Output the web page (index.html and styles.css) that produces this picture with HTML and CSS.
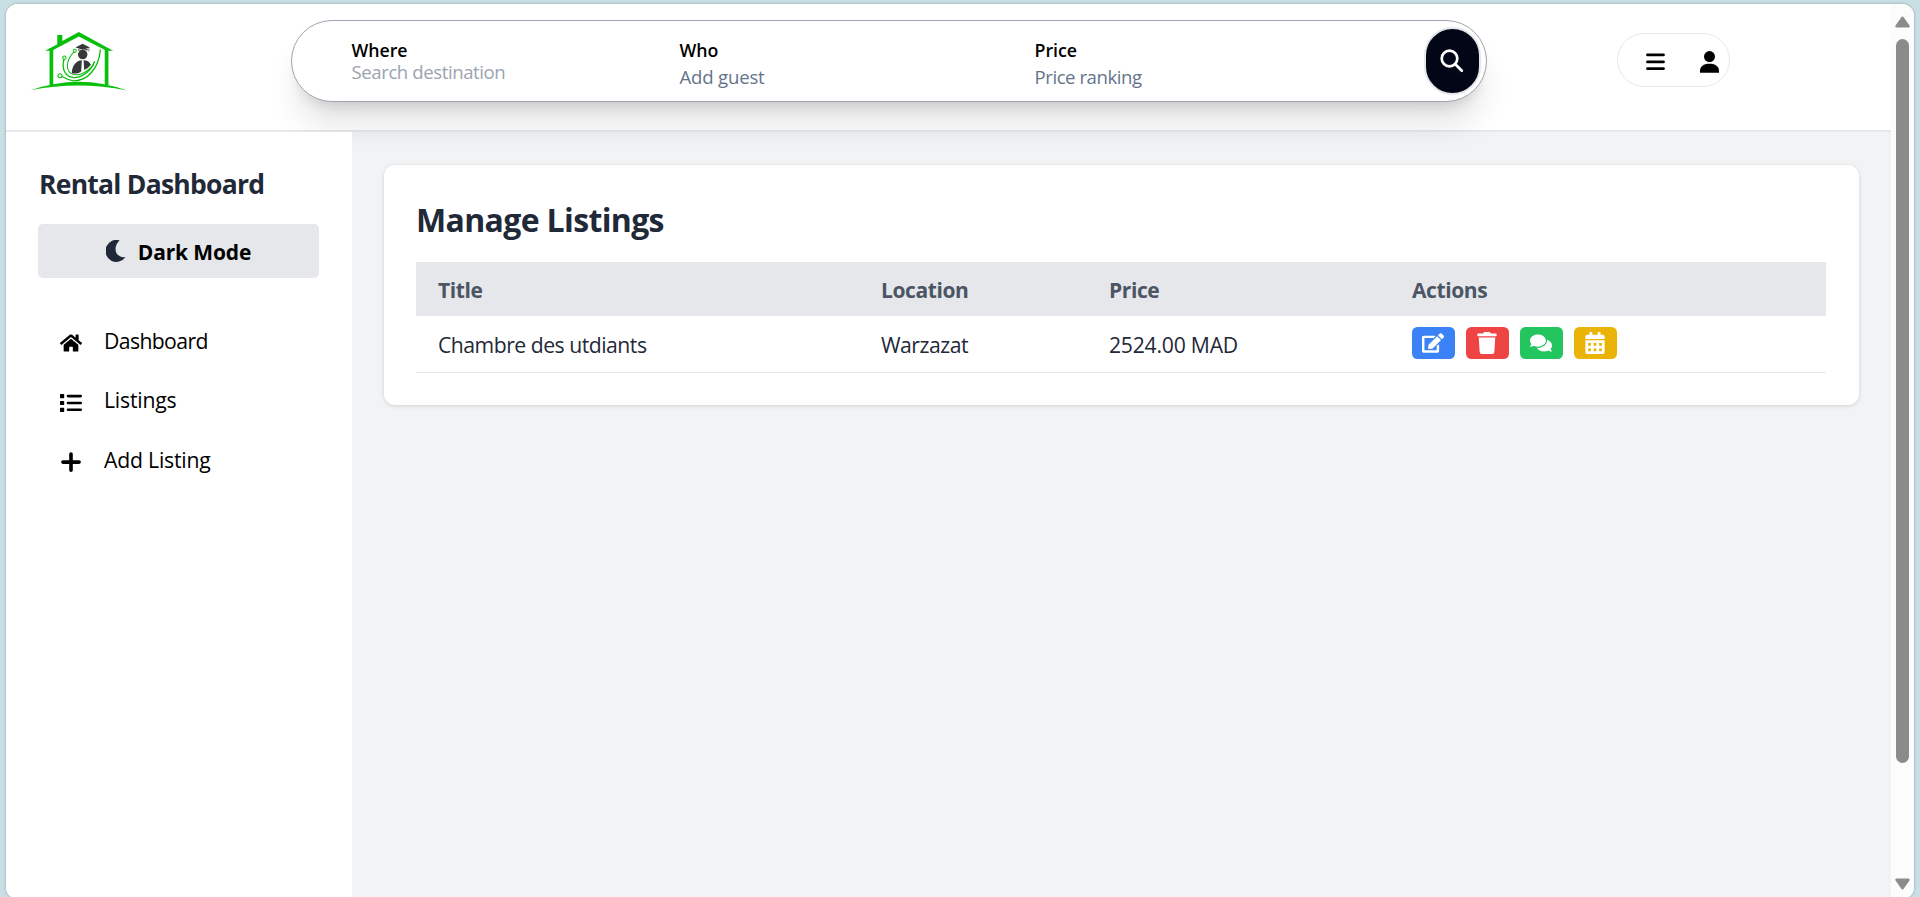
FILE: index.html
```html
<!DOCTYPE html>
<html lang="en">
<head>
<meta charset="utf-8">
<title>Rental Dashboard</title>
<link rel="stylesheet" href="styles.css">
</head>
<body>
<div class="window">
  <div class="page">
    <header class="header">
      <svg class="logo" viewBox="96 93 288 180" fill="none">
        <path d="M96 269Q238 218 382 270Q238 241 96 269Z" fill="#08c00c"/>
        <path d="M151 148h11v106h-11zM315 148h11v106h-11z" fill="#08c00c"/>
        <path d="M138 152L174 132V105h15v18L238 96L340 152H320L238 109L158 152Z" fill="#08c00c"/>
        <path d="M302 148C298 205 262 242 222 241C200 239 187 224 183 227" stroke="#08c00c" stroke-width="4"/>
        <path d="M195 173C183 211 203 235 230 231C254 228 277 207 285 183" stroke="#08c00c" stroke-width="4"/>
        <path d="M226 152C204 174 196 203 214 219C236 231 266 214 281 193" stroke="#08c00c" stroke-width="3"/>
        <g stroke="#08c00c" stroke-width="3" fill="#fff"><circle cx="182" cy="226" r="6"/><circle cx="195" cy="172" r="5"/><circle cx="226" cy="152" r="4.500"/></g>
        <g fill="#383838"><path d="M228 142L249 131L271 142L250 149Z"/><path d="M236 147Q250 152 264 146V151Q250 147 236 152ZM267 144h2v10h-2z"/><circle cx="249.500" cy="163" r="14"/><path d="M217 219C218 195 230 181 247 180L245 213C237 220 228 219 217 219ZM252 180Q267 180 274 193Q266 204 254 209Z"/></g>
      </svg>
      <div class="search">
        <div class="field where"><b>Where</b><span class="placeholder">Search destination</span></div>
        <div class="field who"><b>Who</b><span>Add guest</span></div>
        <div class="field price"><b>Price</b><span class="ranking">Price ranking</span></div>
        <button class="search-btn" aria-label="Search"><svg viewBox="0 0 24 24" fill="none" stroke="#fff" stroke-width="2.700" stroke-linecap="round"><circle cx="9.500" cy="9.500" r="7.800"/><path d="M15.300 15.300L21.800 21.800"/></svg></button>
      </div>
      <div class="account">
        <svg class="menu" viewBox="0 0 19 18"><path d="M1.500 1.900h16M1.500 8.900h16M1.500 15.700h16" stroke="#000" stroke-width="2.800" stroke-linecap="round"/></svg>
        <svg class="user" viewBox="0 0 19 22"><circle cx="9.500" cy="5.600" r="5.500"/><path d="M0 21.800V20C0 15.500 3.500 12.800 9.500 12.800S19 15.500 19 20V21.800Z"/></svg>
      </div>
    </header>
    <div class="body">
      <aside class="sidebar">
        <h2 class="brand">Rental Dashboard</h2>
        <button class="mode"><svg viewBox="0 0 20 22"><path d="M13.600.4A11 11 0 1 0 19.600 17C10.500 18.700 5.500 8 13.600.4Z" fill="#1f2937"/></svg><span>Dark Mode</span></button>
        <nav class="nav">
          <a class="item"><svg viewBox="0 0 576 512"><path d="M280.370 148.260L96 300.110V464a16 16 0 0 0 16 16l112.060-.29a16 16 0 0 0 15.920-16V368a16 16 0 0 1 16-16h64a16 16 0 0 1 16 16v95.640a16 16 0 0 0 16 16.050L464 480a16 16 0 0 0 16-16V300L295.670 148.260a12.190 12.190 0 0 0-15.300 0zM571.600 251.470L488 182.560V44.050a12 12 0 0 0-12-12h-56a12 12 0 0 0-12 12v72.610L318.470 43a48 48 0 0 0-61 0L4.340 251.470a12 12 0 0 0-1.600 16.900l25.500 31A12 12 0 0 0 45.150 301l235.220-193.740a12.190 12.190 0 0 1 15.300 0L530.900 301a12 12 0 0 0 16.900-1.600l25.500-31a12 12 0 0 0-1.700-16.930z"/></svg><span class="tight">Dashboard</span></a>
          <a class="item"><svg viewBox="0 0 22 20"><path d="M.6 1h3a.6.6 0 0 1 .6.6v3a.6.6 0 0 1-.6.6h-3a.6.6 0 0 1-.6-.6v-3A.6.6 0 0 1 .6 1zM.6 7.900h3a.6.6 0 0 1 .6.6v3a.6.6 0 0 1-.6.6h-3a.6.6 0 0 1-.6-.6v-3a.6.6 0 0 1 .6-.6zM.6 14.700h3a.6.6 0 0 1 .6.6v3a.6.6 0 0 1-.6.6h-3a.6.6 0 0 1-.6-.6v-3a.6.6 0 0 1 .6-.6z"/><path d="M8 3.100H20.700M8 10H20.700M8 16.800H20.700" stroke="#000" stroke-width="2.600" stroke-linecap="round"/></svg><span>Listings</span></a>
          <a class="item"><svg viewBox="0 0 22 22"><path d="M11 3V19.200M2.900 11.100H19.100" stroke="#000" stroke-width="3.600" stroke-linecap="round"/></svg><span>Add Listing</span></a>
        </nav>
      </aside>
      <main class="main">
        <section class="card">
          <h1 class="heading">Manage Listings</h1>
          <div class="row head"><span>Title</span><span>Location</span><span>Price</span><span>Actions</span></div>
          <div class="row data">
            <span class="title">Chambre des utdiants</span><span class="title">Warzazat</span><span class="amount">2524.00 MAD</span>
            <div class="actions">
              <button class="act blue" aria-label="Edit"><svg viewBox="0 0 576 512"><path d="M402.600 83.200l90.200 90.200c3.800 3.800 3.800 10 0 13.800L274.400 405.600l-92.800 10.300c-12.400 1.400-22.900-9.100-21.500-21.500l10.300-92.800L388.800 83.200c3.800-3.800 10-3.800 13.800 0zm162-22.900l-48.800-48.800c-15.200-15.200-39.900-15.200-55.200 0l-35.400 35.400c-3.800 3.800-3.800 10 0 13.800l90.200 90.200c3.800 3.800 10 3.800 13.800 0l35.400-35.400c15.200-15.300 15.200-40 0-55.200zM384 346.200V448H64V128h229.800c3.200 0 6.200-1.300 8.500-3.500l40-40c7.600-7.600 2.200-20.500-8.500-20.500H48C21.500 64 0 85.500 0 112v352c0 26.500 21.500 48 48 48h352c26.500 0 48-21.500 48-48V306.200c0-10.700-12.900-16-20.500-8.500l-40 40c-2.200 2.300-3.500 5.300-3.500 8.500z"/></svg></button>
              <button class="act red" aria-label="Delete"><svg viewBox="0 0 448 512"><path d="M432 32H312l-9.400-18.700A24 24 0 0 0 281.100 0H166.800a23.720 23.720 0 0 0-21.400 13.300L136 32H16A16 16 0 0 0 0 48v32a16 16 0 0 0 16 16h416a16 16 0 0 0 16-16V48a16 16 0 0 0-16-16zM32 128L53.200 467a48 48 0 0 0 47.900 45h245.800a48 48 0 0 0 47.900-45L416 128z"/></svg></button>
              <button class="act green" aria-label="Messages"><svg viewBox="0 0 576 512"><path d="M416 192c0-88.400-93.100-160-208-160S0 103.600 0 192c0 34.300 14.100 65.900 38 92-13.400 30.200-35.500 54.200-35.800 54.500-2.200 2.300-2.800 5.700-1.500 8.700S4.800 352 8 352c36.600 0 66.900-12.300 88.700-25 32.200 15.700 70.300 25 111.300 25 114.900 0 208-71.600 208-160zm122 220c23.900-26 38-57.700 38-92 0-66.900-53.500-124.200-129.300-148.100.9 6.600 1.300 13.300 1.300 20.100 0 105.900-107.700 192-240 192-10.800 0-21.300-.8-31.700-1.900C207.800 439.600 281.800 480 368 480c41 0 79.100-9.200 111.300-25 21.800 12.700 52.100 25 88.700 25 3.200 0 6.100-1.900 7.300-4.800 1.300-2.900.7-6.300-1.500-8.700-.3-.3-22.400-24.200-35.800-54.500z"/></svg></button>
              <button class="act yellow" aria-label="Calendar"><svg viewBox="0 0 448 512"><path fill-rule="evenodd" d="M0 464c0 26.500 21.500 48 48 48h352c26.500 0 48-21.500 48-48V192H0zM64 256h64v64H64zM192 256h64v64h-64zM320 256h64v64h-64zM64 384h64v64H64zM192 384h64v64h-64zM320 384h64v64h-64zM400 64h-48V16c0-8.800-7.200-16-16-16h-32c-8.800 0-16 7.200-16 16v48H160V16c0-8.800-7.200-16-16-16h-32c-8.800 0-16 7.200-16 16v48H48C21.500 64 0 85.500 0 112v48h448v-48c0-26.500-21.500-48-48-48z"/></svg></button>
            </div>
          </div>
        </section>
      </main>
    </div>
  </div>
  <div class="scrollbar">
    <svg class="arrow" viewBox="0 0 15 12"><path d="M7.500 1.700L13.500 10.300H1.500Z" fill="#8b8b8b" stroke="#8b8b8b" stroke-width="2.400" stroke-linejoin="round"/></svg>
    <div class="thumb"></div>
    <svg class="arrow" viewBox="0 0 15 12"><path d="M7.500 10.300L13.500 1.700H1.500Z" fill="#8b8b8b" stroke="#8b8b8b" stroke-width="2.400" stroke-linejoin="round"/></svg>
  </div>
</div>
</body>
</html>
```
FILE: styles.css
```css
* { box-sizing: border-box; }
html, body { margin: 0; height: 897px; overflow: hidden; }
body { background: #c8dfe3; font-family: "Open Sans", sans-serif; font-size: 21.2px; color: #000; padding: 4px 6px 0; }
svg { display: block; flex: none; }
button { border: 0; padding: 0; font: inherit; color: inherit; }
h1, h2 { margin: 0; }
span, b, h1, h2 { white-space: nowrap; }

.window { display: flex; height: 895px; border-radius: 12px; overflow: hidden; background: #fff; box-shadow: 0 0 3px rgba(0, 0, 0, .3); }
.page { flex: 1; min-width: 0; display: flex; flex-direction: column; background: #f2f3f5; }

.header { height: 128px; border-bottom: 2px solid #e5e7eb; background: #fff; display: flex; align-items: flex-start; padding-left: 25px; }
.logo { width: 97px; height: 60.600px; margin-top: 27px; }
.search { display: flex; width: 1196px; height: 82px; margin: 16px 0 0 163px; border: 1px solid #9ca3af; border-radius: 41px; padding-left: 59.500px; background: #fff; box-shadow: 0 27px 34px -7px rgba(0, 0, 0, .12), 0 11px 14px -8px rgba(0, 0, 0, .13); }
.field { display: flex; flex-direction: column; font-size: 18.6px; letter-spacing: -.2px; color: #64748b; padding-top: 15px; }
.field b { font-size: 17.800px; font-weight: 600; color: #000; line-height: 28px; letter-spacing: -.05px; }
.field span { line-height: 26px; }
.field .placeholder { color: #9ca3af; line-height: 16px; letter-spacing: -.42px; }
.field .ranking { letter-spacing: -.45px; }
.where { width: 328px; }
.who { width: 355px; }
.price { width: 389px; }
.search-btn { width: 57px; height: 68px; margin-top: 6px; border: 2px solid #e5e7eb; border-radius: 29px; background: #020617; display: flex; align-items: center; justify-content: center; }
.search-btn svg { width: 24px; height: 24px; }
.account { display: flex; width: 113px; height: 54px; margin: 29px 0 0 130px; border: 1.5px solid #e5e7eb; border-radius: 27px; padding: 17px 0 0 28px; gap: 35px; }
.menu { width: 19px; height: 18px; margin-top: 2px; }
.user { width: 19px; height: 22px; }

.body { flex: 1; display: flex; }
.sidebar { width: 346px; background: #fff; padding: 32px 33px 0 32px; position: relative; z-index: 1; }
.brand { font-size: 26.500px; font-weight: 700; line-height: 40px; letter-spacing: -.75px; color: #1f2937; padding-left: 1px; }
.mode { display: flex; align-items: center; justify-content: center; gap: 12px; width: 281px; height: 54px; margin-top: 20px; border-radius: 5px; background: #e5e7eb; font-weight: 700; font-size: 21px; letter-spacing: -.15px; }
.mode svg { width: 20px; height: 22px; }
.mode span { padding-top: 2px; }
.nav { display: flex; flex-direction: column; margin-top: 33px; letter-spacing: -.2px; }
.tight { letter-spacing: -.62px; }
.item { display: flex; align-items: center; gap: 22px; height: 59.500px; padding: 5px 0 0 22px; }
.item svg { width: 22px; height: 22px; }
.item span { padding-bottom: 6px; }

.main { flex: 1; padding: 33px 32px; }
.card { height: 240px; border-radius: 11px; background: #fff; padding: 32px 33px 32px 32px; box-shadow: 0 1px 4px rgba(0, 0, 0, .14); }
.heading { font-size: 32px; font-weight: 700; line-height: 46px; letter-spacing: -.65px; color: #1f2937; margin-bottom: 19px; }
.row { display: grid; grid-template-columns: 443px 228px 303px 1fr; padding-left: 22px; align-items: center; }
.head { height: 54px; background: #e5e7eb; color: #4b5563; font-weight: 700; font-size: 21px; letter-spacing: -.4px; }
.head span { padding-top: 2px; }
.data { height: 57px; border-bottom: 1px solid #e5e7eb; color: #1f2937; }
.title { letter-spacing: -.5px; }
.amount { letter-spacing: -.24px; }
.actions { display: flex; gap: 11px; margin-top: -2px; }
.act { width: 43px; height: 32px; border-radius: 5.400px; display: flex; align-items: center; justify-content: center; }
.act svg { width: 22px; height: 22px; margin-right: 1px; fill: #fff; }
.blue { background: #3b82f6; }
.red { background: #ef4444; }
.green { background: #22c55e; }
.yellow { background: #eab308; }

.scrollbar { width: 23px; background: #fcfcfc; display: flex; flex-direction: column; align-items: center; padding-top: 12px; }
.arrow { width: 15px; height: 12px; }
.thumb { width: 13px; height: 724px; border-radius: 7px; background: #8b8b8b; margin: 11px 0 115px; }
```
